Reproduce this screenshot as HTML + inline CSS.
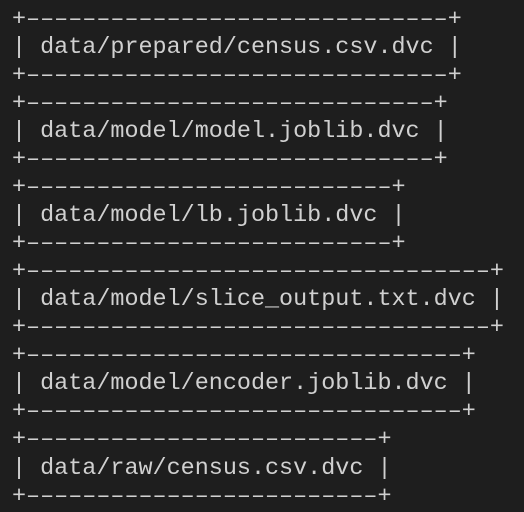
<!DOCTYPE html>
<html><head><meta charset="utf-8"><style>
html,body{margin:0;padding:0;background:#1e1e1e;width:524px;height:512px;overflow:hidden}
pre{margin:0;position:absolute;left:12px;top:5.5px;font-family:"Liberation Mono","DejaVu Sans Mono",monospace;font-size:23.43px;line-height:28.06px;color:#d0d0d0}
</style></head><body><pre>+––––––––––––––––––––––––––––––+
| data/prepared/census.csv.dvc |
+––––––––––––––––––––––––––––––+
+–––––––––––––––––––––––––––––+
| data/model/model.joblib.dvc |
+–––––––––––––––––––––––––––––+
+––––––––––––––––––––––––––+
| data/model/lb.joblib.dvc |
+––––––––––––––––––––––––––+
+–––––––––––––––––––––––––––––––––+
| data/model/slice_output.txt.dvc |
+–––––––––––––––––––––––––––––––––+
+–––––––––––––––––––––––––––––––+
| data/model/encoder.joblib.dvc |
+–––––––––––––––––––––––––––––––+
+–––––––––––––––––––––––––+
| data/raw/census.csv.dvc |
+–––––––––––––––––––––––––+</pre></body></html>
